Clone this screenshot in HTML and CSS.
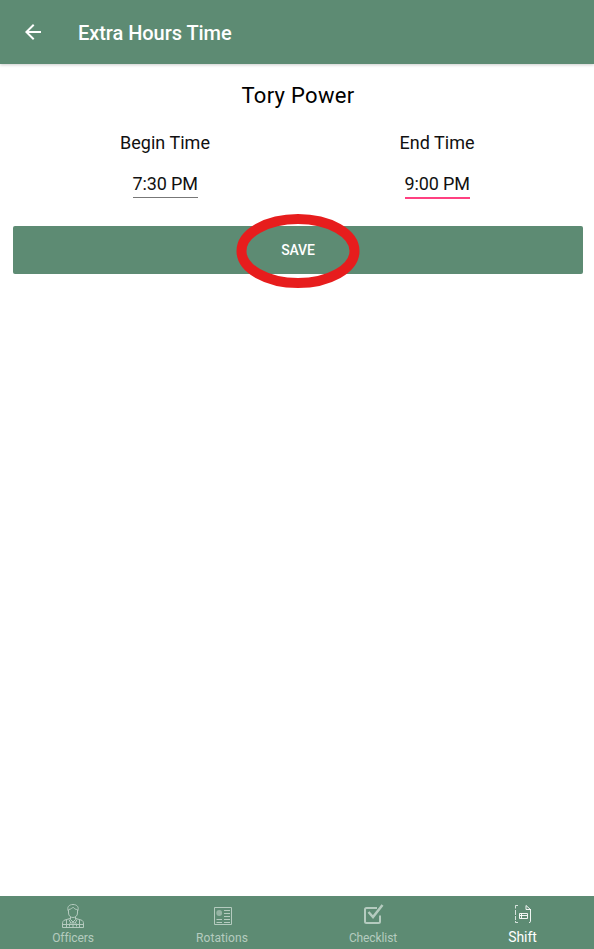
FILE: index.html
```html
<!DOCTYPE html>
<html lang="en">
<head>
<meta charset="utf-8">
<title>Extra Hours Time</title>
<link rel="stylesheet" href="styles.css">
</head>
<body>
<div class="app">
  <header class="topbar">
    <svg class="back" width="24" height="24" viewBox="0 0 24 24"><path fill="#fff" d="M20 11H7.83l5.59-5.59L12 4l-8 8 8 8 1.41-1.41L7.83 13H20z"/></svg>
    <h1 class="title">Extra Hours Time</h1>
  </header>
  <main class="content">
    <h2 class="person">Tory Power</h2>
    <div class="times">
      <div class="time">
        <span class="label">Begin Time</span>
        <span class="value">7:30 PM</span>
      </div>
      <div class="time">
        <span class="label">End Time</span>
        <span class="value active">9:00 PM</span>
      </div>
    </div>
    <button class="save"><span class="save-text">SAVE</span>
      <svg class="ring" width="124" height="76" viewBox="0 0 124 76"><ellipse cx="62" cy="38" rx="56.5" ry="32" fill="none" stroke="#e71d1d" stroke-width="10"/></svg>
    </button>
  </main>
  <nav class="tabs">
    <a class="tab">
      <svg class="icon" width="24" height="26" viewBox="0 0 24 26" fill="none" stroke="currentColor" stroke-width="1">
        <path d="M7.5 8.5C5.5 4 8 1.5 12 1.5s6.500 2.500 4.500 7M7.500 6.500c3 0 3-2 5-2 1 1.500 2 2 4 2M7.500 7v3c0 6 9 6 9 0V7M9.500 14v2.500L12 19l2.500-2.500V14M9 15.500L4 17c-2 .5-2.500 2-2.500 4v3.500h21V21c0-2-.5-3.500-2.500-4l-5-1.500M5.500 17v7M18.500 17v7M8 16.500l2 4 2-2 2 2 2-4M12 19v5M2 21.500h20M8.500 20.500v3M15.500 20.500v3"/>
      </svg>
      <span class="name">Officers</span>
    </a>
    <a class="tab">
      <svg class="icon" width="24" height="26" viewBox="0 0 24 26" fill="none" stroke="currentColor">
        <path d="M3.500 4.500h17v17h-17zM13 7.500h6M13 10.500h6M13 13.500h6M5.500 16.500H11M13 16.500h6M5.500 19.500H11M13 19.500h6"/>
        <circle cx="8.200" cy="10" r="2.900" fill="currentColor" fill-opacity=".65" stroke="none"/>
      </svg>
      <span class="name rotations">Rotations</span>
    </a>
    <a class="tab">
      <svg class="icon" width="24" height="26" viewBox="0 0 24 26" fill="none" stroke="currentColor" stroke-width="2">
        <path d="M16 5H5.500Q4 5 4 6.500v12Q4 20 5.500 20H17.500q1.500 0 1.500-1.500v-6"/><path stroke-width="2.500" d="M7.500 9l4.500 5 9.500-12"/>
      </svg>
      <span class="name">Checklist</span>
    </a>
    <a class="tab selected">
      <svg class="icon" width="24" height="26" viewBox="0 0 24 26" fill="none" stroke="currentColor">
        <path stroke-opacity=".75" d="M7 2.500H4.500v3M4.500 7v5M4.500 13v4M4.500 18v1.500H7"/>
        <path stroke-opacity=".9" d="M15 2.500v4h4.500zM19.500 6v12.500q0 1-1.500 1"/>
        <path stroke-opacity=".9" d="M8.500 10.500h8v5h-8zM8.500 12.500h8M10.500 10.500v5"/>
      </svg>
      <span class="name">Shift</span>
    </a>
  </nav>
</div>
</body>
</html>
```
FILE: styles.css
```css
* { box-sizing: border-box; }
body { margin: 0; background: #fff; color: #111; font-family: Roboto, sans-serif; }
.app { display: flex; flex-direction: column; height: 949px; overflow: hidden; }
.topbar { display: flex; align-items: center; flex: none; height: 64px; padding-left: 21px; background: #5d8b73; box-shadow: 0 1px 3px rgba(0, 0, 0, .2); }
.back { display: block; }
.title { margin: 2px 0 0 33px; color: #fff; font-size: 20px; line-height: 24px; font-weight: 500; letter-spacing: -.05px; }
.content { flex: 1; padding: 18px 11px 0 13px; }
.person { margin: 0; text-align: center; font-size: 22px; line-height: 28px; font-weight: 400; letter-spacing: .3px; color: #000; }
.times { display: grid; grid-template-columns: 1fr 1fr; width: 544px; margin: 21px 0 0 16px; }
.time { display: flex; flex-direction: column; align-items: center; font-size: 18px; line-height: 24px; }
.label { letter-spacing: .03px; }
.value { width: 65px; height: 26px; margin-top: 17px; text-align: center; white-space: nowrap; letter-spacing: -.15px; border-bottom: 1px solid #777; }
.value.active { height: 27px; border-bottom: 2px solid #ff4081; }
.save { position: relative; display: block; width: 570px; height: 48px; margin: 27px 0 0; padding: 0; border: 0; border-radius: 2px; background: #5d8b73; color: #fff; font: 500 14px/20px Roboto, sans-serif; letter-spacing: -.2px; }
.ring { position: absolute; left: 222.500px; top: -13px; }
.tabs { display: grid; grid-template-columns: repeat(4, 150px); flex: none; height: 53px; margin-left: -2px; padding-top: 7px; background: #5d8b73; }
.tab { display: flex; flex-direction: column; align-items: center; color: #b5cbbf; font-size: 12px; line-height: 16px; }
.icon { display: block; flex: none; }
.name { margin-top: 1px; letter-spacing: -.1px; }
.rotations { margin-right: 2px; letter-spacing: .1px; }
.selected { color: #fff; font-size: 14px; }
.selected .name { margin-top: 0; margin-right: 1px; }
```
